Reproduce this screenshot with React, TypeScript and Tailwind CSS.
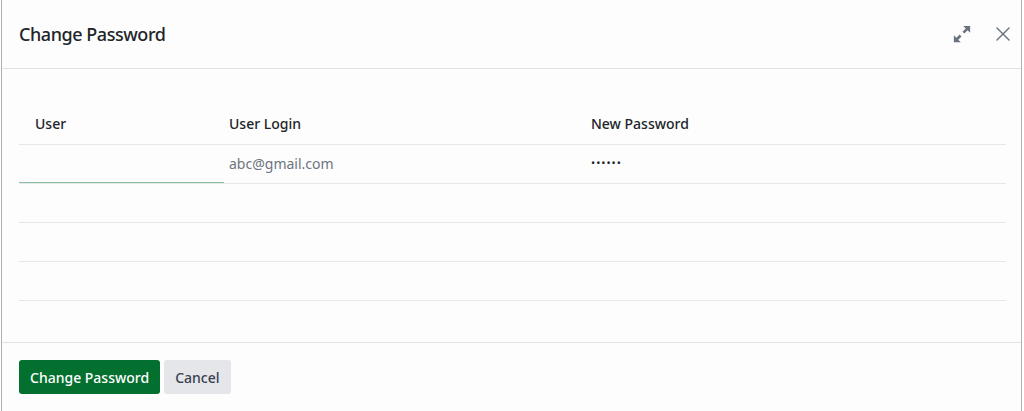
import { X } from "lucide-react";

const rows = [
  { login: "abc@gmail.com", password: "••••••" },
  { login: "", password: "" },
  { login: "", password: "" },
  { login: "", password: "" },
];

function ExpandIcon() {
  return (
    <svg width="20" height="20" viewBox="0 0 16 16" fill="#6b7280">
      <path d="M9 1.5h5.5v5.5l-2-2-2.6 2.6-1.5-1.5 2.6-2.6z" />
      <path d="M7 14.5h-5.5v-5.5l2 2 2.6-2.6 1.5 1.5-2.6 2.6z" />
    </svg>
  );
}

export default function App() {
  return (
    <div
      className="w-[1024px] h-[411px] bg-white text-[#212529] overflow-hidden"
      style={{ fontFamily: '"Noto Sans", "Open Sans", sans-serif' }}
    >
      <div className="h-full ml-[1px] mr-[2px] border-x border-[#b0b0b0] bg-[#fdfdfd] flex flex-col">
        {/* Header */}
        <div className="h-[69px] shrink-0 border-b border-[#dee2e6] flex items-center justify-between pl-[17px] pr-[6px]">
          <h2 className="text-[18px] font-medium tracking-tight">Change Password</h2>
          <div className="flex items-center gap-[19px]">
            <ExpandIcon />
            <X size={24} strokeWidth={1.4} className="text-[#6b7280]" />
          </div>
        </div>

        {/* Body */}
        <div className="flex-1 pl-[17px] pr-[15px] pt-[35px]">
          <table className="w-full border-collapse text-[14px]">
            <thead>
              <tr className="h-[40px] border-b border-[#e5e7eb]">
                <th className="w-[205px] text-left font-medium pl-[16px]">User</th>
                <th className="w-[362px] text-left font-medium pl-[5px]">User Login</th>
                <th className="text-left font-medium pl-[5px]">New Password</th>
              </tr>
            </thead>
            <tbody>
              {rows.map((r, i) => (
                <tr key={i} className="h-[39px] border-b border-[#e5e7eb]">
                  <td className="p-0 h-[39px] align-bottom">
                    {i === 0 && <div className="h-[2px] bg-[#8cbfa0] -mb-[1px]" />}
                  </td>
                  <td className="pl-[5px] text-[#6c757d]">{r.login}</td>
                  <td className="pl-[5px] text-[11px] tracking-[1px]">{r.password}</td>
                </tr>
              ))}
            </tbody>
          </table>
        </div>

        {/* Footer */}
        <div className="h-[69px] shrink-0 border-t border-[#dee2e6] flex items-start gap-[4px] pl-[17px] pt-[17px]">
          <button className="h-[34px] px-[11px] rounded-[3px] bg-[#03702f] text-white text-[14px] font-medium">
            Change Password
          </button>
          <button className="h-[34px] px-[11px] rounded-[3px] bg-[#e4e6ea] text-[#374151] text-[14px] font-medium">
            Cancel
          </button>
        </div>
      </div>
    </div>
  );
}
